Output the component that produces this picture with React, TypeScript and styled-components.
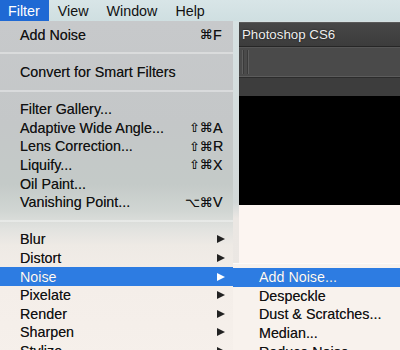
import React from 'react';
import styled, { createGlobalStyle } from 'styled-components';

const Global = createGlobalStyle`
  html, body { margin: 0; padding: 0; }
  body {
    width: 400px; height: 350px; overflow: hidden;
    font-family: "Liberation Sans", "DejaVu Sans", sans-serif;
  }
`;

const Screen = styled.div`
  position: relative;
  width: 400px;
  height: 350px;
  overflow: hidden;
  display: flex;
  flex-direction: column;
  background: #d6e1e2;
`;

const MenuBar = styled.div`
  height: 21px;
  flex: none;
  display: flex;
  align-items: stretch;
  background: linear-gradient(#d8e5e7, #cfdfe1);
  font-size: 14.3px;
  color: #111;
`;

const MenuTitle = styled.div<{ $active?: boolean; $first?: boolean }>`
  display: flex;
  align-items: center;
  padding: 0 9px 0 ${(p) => (p.$first ? 8 : 9)}px;
  background: ${(p) => (p.$active ? '#1f69d4' : 'transparent')};
  color: ${(p) => (p.$active ? '#fff' : '#111')};
`;

const Desktop = styled.div`
  flex: 1;
  display: flex;
  padding: 1px 0 0 239px;
  background: linear-gradient(#d6e1e2 0%, #d2d8d8 55%, #ebe7e3 60%, #ece8e4 100%);
`;

const PsWindow = styled.div`
  flex: 1;
  display: flex;
  flex-direction: column;
`;

const TitleBar = styled.div`
  height: 23px;
  flex: none;
  display: flex;
  align-items: center;
  padding-left: 3px;
  background: linear-gradient(#474747, #3c3c3c);
  border-top: 1px solid #5a5a5a;
  border-bottom: 1px solid #262626;
  color: #eeeeee;
  font-size: 13.3px;
  text-shadow: 0 0 2px rgba(0, 0, 0, 0.8);
`;

const OptionsBar = styled.div`
  height: 28px;
  flex: none;
  display: flex;
  align-items: center;
  padding-left: 3px;
  background: #4a4a4a;
  border-top: 1px solid #565656;
  border-bottom: 1px solid #5c5c5c;
`;

const Grip = styled.div`
  width: 5px;
  height: 24px;
  border-left: 1px solid #5e5e5e;
  border-right: 1px solid #5e5e5e;
  box-shadow: inset 1px 0 0 #3a3a3a, inset -1px 0 0 #3a3a3a;
`;

const PanelStrip = styled.div`
  height: 18px;
  flex: none;
  background: #3d3d3d;
  border-top: 1px solid #2c2c2c;
`;

const Canvas = styled.div`
  height: 109px;
  flex: none;
  background: #000;
`;

const Workspace = styled.div`
  flex: 1;
  background: #fcf5f1;
`;

const Menu = styled.div`
  position: absolute;
  left: 0;
  top: 21px;
  width: 233px;
  height: 340px;
  padding-top: 4.5px;
  box-sizing: border-box;
  display: flex;
  flex-direction: column;
  background: linear-gradient(
    to bottom,
    #c7c9cb 0%,
    #c4c7c8 30%,
    #c4cac8 48%,
    #d1d6d3 56%,
    #e1e2df 61%,
    #eeeae5 66%,
    #f4eee9 78%,
    #f6f0eb 100%
  );
  font-size: 14.3px;
  color: #111;
  text-shadow: 0 0 0.4px rgba(0, 0, 0, 0.5);
`;

const SubMenu = styled.div`
  position: absolute;
  left: 233px;
  top: 263px;
  width: 180px;
  height: 100px;
  padding-top: 4px;
  box-sizing: border-box;
  display: flex;
  flex-direction: column;
  background: #f8f2ed;
  border-top: 1px solid #fdfbf9;
  font-size: 14.3px;
  color: #111;
  text-shadow: 0 0 0.4px rgba(0, 0, 0, 0.5);
`;

const Item = styled.div<{ $active?: boolean; $indent?: number }>`
  height: 18.6px;
  flex: none;
  display: flex;
  align-items: center;
  padding: 0 8px 0 ${(p) => p.$indent ?? 20}px;
  white-space: nowrap;
  background: ${(p) => (p.$active ? '#2d7ce2' : 'transparent')};
  color: ${(p) => (p.$active ? '#fff' : '#111')};
`;

const Label = styled.span`
  flex: 1;
`;

const Shortcut = styled.span`
  display: flex;
  align-items: center;
`;

const Mods = styled.span`
  text-align: right;
  font-family: "DejaVu Sans", sans-serif;
  font-size: 13px;
  letter-spacing: -0.5px;
`;

const Key = styled.span`
  width: 12px;
  margin-left: 1px;
  text-align: left;
`;

const Arrow = styled.span<{ $active?: boolean }>`
  width: 0;
  height: 0;
  border-top: 4.5px solid transparent;
  border-bottom: 4.5px solid transparent;
  border-left: 8px solid ${(p) => (p.$active ? '#fff' : '#222')};
`;

const Separator = styled.div`
  height: 18.6px;
  flex: none;
  display: flex;
  align-items: center;
  &::after {
    content: '';
    flex: 1;
    height: 2px;
    background: rgba(255, 255, 255, 0.35);
  }
`;

type Entry =
  | { sep: true }
  | { label: string; mods?: string; keyChar?: string; sub?: boolean; active?: boolean };

const entries: Entry[] = [
  { label: 'Add Noise', mods: '⌘', keyChar: 'F' },
  { sep: true },
  { label: 'Convert for Smart Filters' },
  { sep: true },
  { label: 'Filter Gallery...' },
  { label: 'Adaptive Wide Angle...', mods: '⇧⌘', keyChar: 'A' },
  { label: 'Lens Correction...', mods: '⇧⌘', keyChar: 'R' },
  { label: 'Liquify...', mods: '⇧⌘', keyChar: 'X' },
  { label: 'Oil Paint...' },
  { label: 'Vanishing Point...', mods: '⌥⌘', keyChar: 'V' },
  { sep: true },
  { label: 'Blur', sub: true },
  { label: 'Distort', sub: true },
  { label: 'Noise', sub: true, active: true },
  { label: 'Pixelate', sub: true },
  { label: 'Render', sub: true },
  { label: 'Sharpen', sub: true },
  { label: 'Stylize', sub: true },
];

const subEntries = ['Add Noise...', 'Despeckle', 'Dust & Scratches...', 'Median...', 'Reduce Noise...'];

export default function App() {
  return (
    <Screen>
      <Global />
      <MenuBar>
        <MenuTitle $first $active>Filter</MenuTitle>
        <MenuTitle>View</MenuTitle>
        <MenuTitle>Window</MenuTitle>
        <MenuTitle>Help</MenuTitle>
      </MenuBar>
      <Desktop>
        <PsWindow>
          <TitleBar>Photoshop CS6</TitleBar>
          <OptionsBar>
            <Grip />
          </OptionsBar>
          <PanelStrip />
          <Canvas />
          <Workspace />
        </PsWindow>
      </Desktop>
      <Menu>
        {entries.map((e, i) =>
          'sep' in e ? (
            <Separator key={i} />
          ) : (
            <Item key={i} $active={e.active}>
              <Label>{e.label}</Label>
              {e.keyChar && (
                <Shortcut>
                  <Mods>{e.mods}</Mods>
                  <Key>{e.keyChar}</Key>
                </Shortcut>
              )}
              {e.sub && <Arrow $active={e.active} />}
            </Item>
          )
        )}
      </Menu>
      <SubMenu>
        {subEntries.map((s, i) => (
          <Item key={s} $indent={26} $active={i === 0}>
            <Label>{s}</Label>
          </Item>
        ))}
      </SubMenu>
    </Screen>
  );
}
